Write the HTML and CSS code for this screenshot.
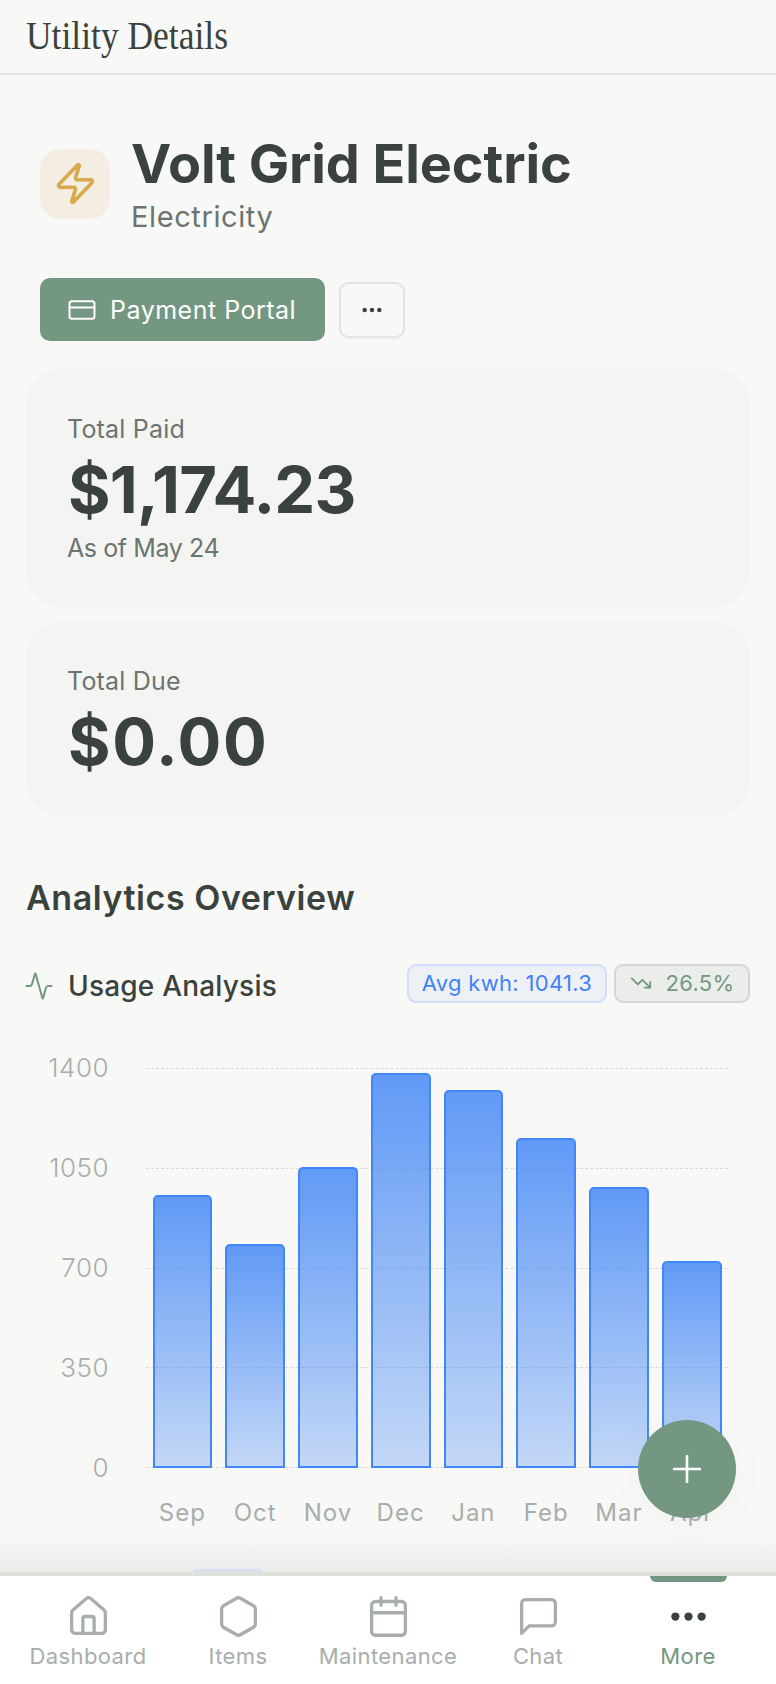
FILE: index.html
```html
<!DOCTYPE html>
<html lang="en">
<head>
    <meta charset="UTF-8">
    <meta name="viewport" content="width=device-width, initial-scale=1.0">
    <title>Utility Details</title>
    <link rel="stylesheet" href="styles.css">
</head>
<body>
<div class="app">
    <header class="topbar">
        <h1 class="topbar-title">Utility Details</h1>
    </header>

    <main class="content">
        <section class="utility-head">
            <div class="utility-icon">
                <svg class="icon-zap" viewBox="0 0 24 24"><path d="M4 14a1 1 0 0 1-.78-1.63l9.9-10.2a.5.5 0 0 1 .86.46l-1.92 6.02A1 1 0 0 0 13 10h7a1 1 0 0 1 .78 1.63l-9.9 10.2a.5.5 0 0 1-.86-.46l1.92-6.02A1 1 0 0 0 11 14z"/></svg>
            </div>
            <div>
                <h2 class="utility-name">Volt Grid Electric</h2>
                <p class="utility-type">Electricity</p>
            </div>
        </section>

        <div class="actions">
            <button class="btn-portal">
                <svg class="icon-card" viewBox="0 0 24 24"><rect x="2" y="5" width="20" height="14" rx="2"/><path d="M2 10h20"/></svg>
                Payment Portal
            </button>
            <button class="btn-more" aria-label="More actions">
                <svg viewBox="0 0 24 8"><circle cx="4" cy="4" r="2.4"/><circle cx="12" cy="4" r="2.4"/><circle cx="20" cy="4" r="2.4"/></svg>
            </button>
        </div>

        <section class="card card-paid">
            <p class="card-label">Total Paid</p>
            <p class="card-value">$1,174.23</p>
            <p class="card-note">As of May 24</p>
        </section>
        <section class="card card-due">
            <p class="card-label">Total Due</p>
            <p class="card-value">$0.00</p>
        </section>

        <h2 class="section-title">Analytics Overview</h2>

        <div class="chart-head">
            <div class="chart-title">
                <svg class="icon-activity" viewBox="0 0 24 24"><path d="M22 12h-2.48a2 2 0 0 0-1.93 1.46l-2.35 8.36a.25.25 0 0 1-.48 0L9.24 2.18a.25.25 0 0 0-.48 0l-2.35 8.36A2 2 0 0 1 4.49 12H2"/></svg>
                <span>Usage Analysis</span>
            </div>
            <div class="chart-pills">
                <span class="pill pill-blue">Avg kwh: 1041.3</span>
                <span class="pill pill-green">
                    <svg class="icon-trend" viewBox="0 0 24 24"><path d="M22 17l-8.5-8.5-5 5L2 7"/><path d="M16 17h6v-6"/></svg>
                    26.5%
                </span>
            </div>
        </div>

        <div class="chart">
            <div class="y-axis">
                <span>1400</span>
                <span>1050</span>
                <span>700</span>
                <span>350</span>
                <span>0</span>
            </div>
            <div class="plot">
                <div class="grid-lines">
                    <i></i><i></i><i></i><i></i><i></i>
                </div>
                <div class="bars">
                    <div class="bar" style="height: 273px"></div>
                    <div class="bar" style="height: 224px"></div>
                    <div class="bar" style="height: 301px"></div>
                    <div class="bar" style="height: 395px"></div>
                    <div class="bar" style="height: 378px"></div>
                    <div class="bar" style="height: 330px"></div>
                    <div class="bar" style="height: 281px"></div>
                    <div class="bar" style="height: 207px"></div>
                </div>
            </div>
            <div class="x-axis">
                <span>Sep</span>
                <span>Oct</span>
                <span>Nov</span>
                <span>Dec</span>
                <span>Jan</span>
                <span>Feb</span>
                <span>Mar</span>
                <span>Apr</span>
            </div>
        </div>

        <div class="fade"></div>
        <div class="peek"></div>
        <button class="fab" aria-label="Add">
            <svg viewBox="0 0 28 28"><path d="M14 1v26M1 14h26"/></svg>
        </button>
    </main>

    <nav class="tabbar">
        <a class="tab">
            <svg viewBox="0 0 24 24"><path d="M15 21v-8a1 1 0 0 0-1-1h-4a1 1 0 0 0-1 1v8"/><path d="M3 10a2 2 0 0 1 .709-1.528l7-5.999a2 2 0 0 1 2.582 0l7 5.999A2 2 0 0 1 21 10v9a2 2 0 0 1-2 2H5a2 2 0 0 1-2-2z"/></svg>
            Dashboard
        </a>
        <a class="tab">
            <svg viewBox="0 0 24 24"><path d="M21 16V8a2 2 0 0 0-1-1.73l-7-4a2 2 0 0 0-2 0l-7 4A2 2 0 0 0 3 8v8a2 2 0 0 0 1 1.73l7 4a2 2 0 0 0 2 0l7-4A2 2 0 0 0 21 16z"/></svg>
            Items
        </a>
        <a class="tab">
            <svg viewBox="0 0 24 24"><rect x="3" y="4" width="18" height="18" rx="2"/><path d="M16 2v4M8 2v4M3 10h18"/></svg>
            Maintenance
        </a>
        <a class="tab">
            <svg viewBox="0 0 24 24"><path d="M21 15a2 2 0 0 1-2 2H7l-4 4V5a2 2 0 0 1 2-2h14a2 2 0 0 1 2 2z"/></svg>
            Chat
        </a>
        <a class="tab active">
            <svg class="icon-dots" viewBox="0 0 24 24"><circle cx="5" cy="12" r="2.2"/><circle cx="12" cy="12" r="2.2"/><circle cx="19" cy="12" r="2.2"/></svg>
            More
        </a>
    </nav>
</div>
</body>
</html>
```

FILE: styles.css
```css
* {
    box-sizing: border-box;
}
body {
    margin: 0;
    background-color: #f8f8f6;
    color: #3a423d;
    font-family: Inter, "Noto Sans", sans-serif;
}
h1, h2, p {
    margin: 0;
}
svg {
    fill: none;
    stroke: currentColor;
    stroke-width: 2;
    stroke-linecap: round;
    stroke-linejoin: round;
    flex: none;
}
button {
    font-family: inherit;
    cursor: pointer;
}
.app {
    height: 1684px;
    display: flex;
    flex-direction: column;
    overflow: hidden;
}

/* top bar */
.topbar {
    height: 75px;
    padding-left: 26px;
    border-bottom: 2px solid #e4e5e2;
}
.topbar-title {
    font-family: "Liberation Serif", serif;
    font-weight: 400;
    font-size: 41px;
    line-height: 70px;
    display: inline-block;
    transform: scaleX(0.865);
    transform-origin: left center;
}

.content {
    flex: 1;
    position: relative;
    padding: 0 26px;
    overflow: hidden;
}

/* utility header */
.utility-head {
    display: flex;
    align-items: center;
    gap: 21px;
    padding: 59px 0 0 14px;
}
.utility-icon {
    width: 70px;
    height: 70px;
    margin-bottom: 3px;
    border-radius: 20px;
    background-color: #f3eee1;
    display: flex;
    align-items: center;
    justify-content: center;
    color: #d9a94f;
}
.icon-zap {
    width: 45px;
    height: 45px;
}
.utility-name {
    font-size: 54px;
    font-weight: 700;
    line-height: 60px;
    letter-spacing: -0.1px;
}
.utility-type {
    font-size: 29px;
    line-height: 38px;
    letter-spacing: 0.6px;
    margin-top: 4px;
    color: #6a756f;
}

.actions {
    display: flex;
    align-items: center;
    gap: 14px;
    margin: 42px 0 0 14px;
}
.btn-portal {
    display: flex;
    align-items: center;
    gap: 13px;
    height: 63px;
    width: 285px;
    padding: 0 0 0 27px;
    border: none;
    border-radius: 10px;
    background-color: #739781;
    color: #fff;
    font-size: 25px;
    letter-spacing: 0.5px;
}
.icon-card {
    width: 30px;
    height: 30px;
    stroke-width: 1.6;
}
.btn-more {
    width: 66px;
    height: 56px;
    display: flex;
    align-items: center;
    justify-content: center;
    border: 2px solid #e4e5e2;
    border-radius: 10px;
    background-color: #f8f8f6;
    box-shadow: 0 1px 3px rgba(0, 0, 0, 0.05);
    color: #3a423d;
}
.btn-more svg {
    width: 22px;
    height: 8px;
    fill: currentColor;
    stroke: none;
}

/* total cards */
.card {
    border-radius: 36px;
    background-color: #f4f4f2;
    padding: 0 41px;
}
.card-paid {
    height: 238px;
    margin-top: 28px;
    padding-top: 44px;
}
.card-due {
    height: 196px;
    margin-top: 14px;
    padding-top: 44px;
}
.card-label,
.card-note {
    font-size: 25px;
    line-height: 32px;
    letter-spacing: 0.2px;
    color: #6a756f;
}
.card-value {
    font-size: 65px;
    font-weight: 650;
    line-height: 78px;
    margin-top: 6px;
    margin-left: 1px;
}
.card-paid .card-value {
    letter-spacing: -0.8px;
}
.card-due .card-value {
    letter-spacing: 1.7px;
}
.card-note {
    margin-top: 3px;
    letter-spacing: -0.4px;
}

.section-title {
    font-size: 34px;
    font-weight: 600;
    line-height: 42px;
    letter-spacing: 0.55px;
    margin-top: 60px;
}

/* chart */
.chart-head {
    display: flex;
    align-items: center;
    justify-content: space-between;
    margin-top: 44px;
}
.chart-title {
    display: flex;
    align-items: center;
    gap: 14px;
    padding-top: 6px;
    font-size: 28px;
    font-weight: 500;
    letter-spacing: 0.2px;
}
.icon-activity {
    width: 30px;
    height: 30px;
    margin-left: -2px;
    color: #739781;
    stroke-width: 1.6;
}
.chart-pills {
    display: flex;
    gap: 7px;
}
.pill {
    display: flex;
    align-items: center;
    height: 39px;
    border-radius: 9px;
    font-size: 22px;
    letter-spacing: 0.3px;
}
.pill-blue {
    width: 200px;
    justify-content: center;
    background-color: #edf1f5;
    border: 2px solid #cfdffa;
    color: #3f83f8;
}
.pill-green {
    width: 136px;
    justify-content: center;
    gap: 14px;
    background-color: #ebedeb;
    border: 2px solid #d3d7d3;
    color: #739781;
}
.icon-trend {
    width: 22px;
    height: 22px;
}

.chart {
    display: grid;
    grid-template-columns: 120px 582px;
    grid-template-rows: 400px auto;
    margin-top: 65px;
}
.y-axis {
    display: flex;
    flex-direction: column;
    justify-content: space-between;
    align-items: flex-end;
    padding-right: 37px;
    margin: -16px 0;
    font-size: 26px;
    font-weight: 300;
    line-height: 32px;
    letter-spacing: 0.5px;
    color: #a7aeab;
}
.plot {
    position: relative;
}
.bars {
    position: relative;
    height: 100%;
    display: grid;
    grid-template-columns: repeat(8, 1fr);
    align-items: end;
}
.bar {
    margin: 0 6.5px;
    border: 2px solid #4287f8;
    border-radius: 5px 5px 0 0;
    background-image: linear-gradient(to bottom, rgba(59, 130, 246, 0.8), rgba(59, 130, 246, 0.28));
}
.grid-lines {
    position: absolute;
    inset: 0;
    display: flex;
    flex-direction: column;
    justify-content: space-between;
}
.grid-lines i {
    display: block;
    border-top: 1px dashed #d8dad7;
}
.x-axis {
    grid-column: 2;
    display: grid;
    grid-template-columns: repeat(8, 1fr);
    margin-top: 29px;
    font-size: 24px;
    line-height: 32px;
    letter-spacing: 1px;
    text-align: center;
    color: #a7aeab;
}

.fade {
    position: absolute;
    left: 0;
    right: 0;
    bottom: 0;
    height: 36px;
    background-image: linear-gradient(to bottom, rgba(226, 228, 224, 0), rgba(226, 228, 224, 0.6));
}
.peek {
    position: absolute;
    left: 193px;
    bottom: 0;
    width: 69px;
    height: 3px;
    border-radius: 4px 4px 0 0;
    background-color: #d7e1f2;
}
.fab {
    position: absolute;
    left: 638px;
    top: 1345px;
    width: 98px;
    height: 98px;
    border: none;
    border-radius: 50%;
    background-color: #739781;
    color: #fff;
    display: flex;
    align-items: center;
    justify-content: center;
    box-shadow: 0 6px 40px rgba(0, 0, 0, 0.03);
}
.fab svg {
    width: 28px;
    height: 28px;
    stroke-width: 2.6;
}

/* bottom nav */
.tabbar {
    height: 112px;
    display: flex;
    padding: 0 13px;
    background-color: #fff;
    border-top: 4px solid #dfe1dc;
}
.tab {
    position: relative;
    width: 150px;
    display: flex;
    flex-direction: column;
    align-items: center;
    padding-top: 18px;
    font-size: 22px;
    line-height: 28px;
    letter-spacing: 0.4px;
    color: #a7aeab;
}
.tab svg {
    width: 45px;
    height: 45px;
    stroke-width: 1.75;
    margin-bottom: 3px;
}
.tab.active {
    color: #739781;
}
.tab.active::before {
    content: "";
    position: absolute;
    top: 0;
    left: 37px;
    width: 77px;
    height: 6px;
    border-radius: 0 0 6px 6px;
    background-color: #739781;
}
.tab .icon-dots {
    fill: #3a423d;
    stroke: none;
}
```
